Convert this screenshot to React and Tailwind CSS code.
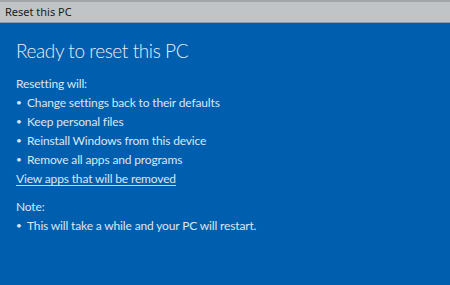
import React from "react";

const items = [
  "Change settings back to their defaults",
  "Keep personal files",
  "Reinstall Windows from this device",
  "Remove all apps and programs",
];

const Bullet = ({ children }) => (
  <div className="flex items-center h-[19px]">
    <span className="w-[11px] text-[10px]">•</span>
    <span>{children}</span>
  </div>
);

export default function App() {
  return (
    <div
      className="w-[450px] h-[285px] flex flex-col bg-[#005eae] overflow-hidden"
      style={{ fontFamily: 'Lato, "Noto Sans", sans-serif' }}
    >
      {/* Title bar */}
      <div className="h-[2px] bg-[#a3a5a7]" />
      <div
        className="h-[21px] bg-[#c0c4c6] border-b border-[#8a9aa8] flex items-center px-[5px] text-[11px] text-[#1a1a1a]"
        style={{ fontFamily: '"Noto Sans", sans-serif' }}
      >
        Reset this PC
      </div>

      <div className="flex flex-col px-[16px] pt-[16px] text-[12px] tracking-[-0.15px] text-[#dbe6f2]">
        <h1 className="text-[19px] font-light leading-[24px] tracking-[-0.4px] text-[#e6eef7]">
          Ready to reset this PC
        </h1>

        <div className="mt-[11px] flex flex-col">
          <div className="h-[19px] flex items-center">Resetting will:</div>
          {items.map((t) => (
            <Bullet key={t}>{t}</Bullet>
          ))}
          <a className="h-[20px] flex items-center underline underline-offset-2 decoration-[#c8d8ea]">
            View apps that will be removed
          </a>
          <div className="mt-[8px] h-[19px] flex items-center">Note:</div>
          <Bullet>This will take a while and your PC will restart.</Bullet>
        </div>
      </div>
    </div>
  );
}
